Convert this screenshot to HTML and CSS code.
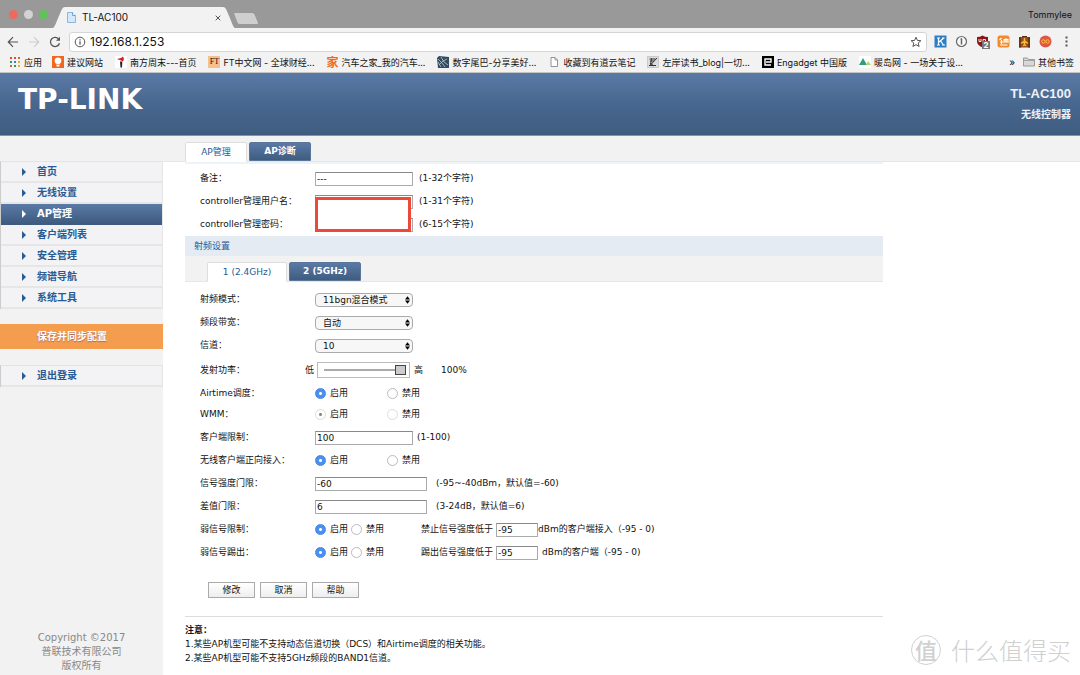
FILE: index.html
```html
<!DOCTYPE html>
<html lang="zh-CN">
<head>
<meta charset="utf-8">
<title>TL-AC100</title>
<link rel="stylesheet" href="styles.css">
</head>
<body>
<header class="browser">
  <div class="tabstrip">
    <div class="lights"><i class="light red"></i><i class="light gray"></i><i class="light green"></i></div>
    <div class="tab">
      <svg class="tab-shape" viewBox="0 0 182 21" preserveAspectRatio="none"><path d="M0 21 C2 20 2 18 9 2 Q10 0 12 0 H170 Q172 0 173 2 C180 18 180 20 182 21Z" fill="#f2f2f2"/></svg>
      <svg class="tab-icon" viewBox="0 0 9 11"><path d="M.5.5h5l3 3v7h-8z" fill="#d5e8fb" stroke="#8db6df"/><path d="M5.500.5v3h3" fill="#fff" stroke="#6f9fd0"/></svg>
      <span class="tab-title">TL-AC100</span>
      <button class="tab-close" aria-label="关闭"><svg viewBox="0 0 6 6"><path d="M.7.7l4.600 4.600M5.300.7L.7 5.300" stroke="#555" fill="none"/></svg></button>
    </div>
    <svg class="newtab" viewBox="0 0 24 11"><path d="M1 0h17q2 0 2.500 1.500L24 10q0 1-1 1H6q-2 0-2.500-1.500L.3 1Q0 0 1 0z" fill="#cfcfcf"/></svg>
    <span class="user">Tommylee</span>
  </div>
  <div class="toolbar">
    <button class="nav-btn" aria-label="后退"><svg viewBox="0 0 12 12"><path d="M11 6H1.500M6 1.200L1.300 6 6 10.800" stroke="#555" stroke-width="1.200" fill="none"/></svg></button>
    <button class="nav-btn" aria-label="前进"><svg viewBox="0 0 12 12"><path d="M1 6h9.500M6 1.200L10.700 6 6 10.800" stroke="#ccc" stroke-width="1.200" fill="none"/></svg></button>
    <button class="nav-btn" aria-label="刷新"><svg viewBox="0 0 12 12"><path d="M10 3.500A4.600 4.600 0 1 0 10.500 7.200" stroke="#555" stroke-width="1.300" fill="none"/><path d="M11 .8v4H7z" fill="#555"/></svg></button>
    <div class="omnibox">
      <svg class="info" viewBox="0 0 12 12"><circle cx="6" cy="6" r="4.800" stroke="#555" fill="none"/><path d="M6 5.200v3.600M6 3.200v1.200" stroke="#555" stroke-width="1.200"/></svg>
      <input class="url" aria-label="地址" value="192.168.1.253">
      <svg class="info" viewBox="0 0 12 12"><path d="M6 1.200l1.400 3.200 3.500.3-2.700 2.300.9 3.500L6 8.700l-3.100 1.800.9-3.500L1.100 4.700l3.500-.3z" stroke="#555" fill="none"/></svg>
    </div>
    <div class="exts">
      <svg class="ext" viewBox="0 0 13 13"><path d="M.5.5h12v12H.5z" fill="#2c7fc4"/><path d="M3 3h3M3 10h3M4.500 3v7M8 3h2.500M9.500 3.200L5 7M6.500 5.800L9.500 10M8 10h3" stroke="#fff" stroke-width="1.200"/></svg>
      <svg class="ext" viewBox="0 0 13 13"><circle cx="6.500" cy="6.500" r="5" stroke="#666" fill="#fafafa" stroke-width="1.200"/><path d="M6.500 3.500v6M5.500 4h1.500" stroke="#666" stroke-width="1.500"/></svg>
      <span class="ublock"><svg class="ext" viewBox="0 0 13 13"><path d="M6.500.5Q9 2 12 2v4.500Q12 10 6.500 12.500 1 10 1 6.500V2Q4 2 6.500.5z" fill="#8c1616"/><path d="M3 4v2.500h2V4M7 8V4.500h2.500v2H7" stroke="#fff" fill="none" stroke-width=".9"/></svg><b class="count">2</b></span>
      <svg class="ext" viewBox="0 0 13 13"><rect x=".5" y=".5" width="12" height="12" rx="2.500" fill="#f08a2c"/><path d="M2.500 5l2-2M3 7h3M4.500 5v4M7 8V4.500h4V8M9 3v5M3 10h7.500M7 6h4" stroke="#fff" fill="none" stroke-width="1.100"/></svg>
      <svg class="ext" viewBox="0 0 13 13"><path d="M4 1h5v2H4z" fill="#5a2d11"/><path d="M1 2h11v10.500H1z" fill="#974d1c"/><path d="M1 2h2v10.500H1zM10 2h2v10.500h-2z" fill="#6d3210"/><path d="M6.500 2.500l.8 1.200v2.100l3 2v1l-3-.8v1.600l1 .9v.7l-1.800-.5-1.800.5v-.7l1-.9V8l-3 .8v-1l3-2V3.700z" fill="#f5bd37"/></svg>
      <svg class="ext" viewBox="0 0 13 13"><circle cx="6.500" cy="6.500" r="6" fill="#e35446"/><circle cx="4.400" cy="6.500" r="1.700" fill="none" stroke="#f8c640"/><circle cx="8.600" cy="6.500" r="1.700" fill="none" stroke="#f8c640"/></svg>
      <svg class="ext" viewBox="0 0 13 13"><path d="M5.500 1.500h2v2h-2zM5.500 5.500h2v2h-2zM5.500 9.500h2v2h-2z" fill="#555"/></svg>
    </div>
  </div>
  <nav class="bookmarks">
    <a class="bm apps" href="#"><svg viewBox="0 0 12 12"><path d="M1 1h2v2H1zM5 1h2v2H5z" fill="#e24a3b"/><path d="M9 1h2v2H9zM1 9h2v2H1z" fill="#d9632f"/><path d="M1 5h2v2H1zM5 9h2v2H5z" fill="#2f9b51"/><path d="M5 5h2v2H5z" fill="#397de0"/><path d="M9 5h2v2H9zM9 9h2v2H9z" fill="#e6b12a"/></svg>应用</a>
    <a class="bm" href="#"><svg viewBox="0 0 12 12"><path d="M0 0h12v12H0z" fill="#f2671f"/><circle cx="6" cy="4.800" r="3.300" fill="#fff"/><path d="M4.500 7h3v3.500h-3z" fill="#fff"/><path d="M4.500 8.500h3" stroke="#f2671f" stroke-width=".6"/></svg>建议网站</a>
    <a class="bm" href="#"><svg viewBox="0 0 12 12"><path d="M0 0h12v12H0z" fill="#fff"/><path d="M2 3l4-1 2-1.500L9 3 8 5.500 6 4.500z" fill="#d91f1f"/><path d="M5 5.500h2.300L7 11.500H5.500z" fill="#222"/></svg>南方周末---首页</a>
    <a class="bm" href="#"><span class="ft">FT</span>FT中文网 - 全球财经...</a>
    <a class="bm" href="#"><span class="jia">家</span>汽车之家_我的汽车...</a>
    <a class="bm" href="#"><svg viewBox="0 0 12 12"><path d="M0 2l2-2 10 1v11H1z" fill="#334b5d"/><path d="M1 3l4 4 3 4M4 1l3 5 4 3M2 9l4-4 4-2M1 6l3 5" stroke="#b9cbd7" stroke-width=".8" fill="none"/></svg>数字尾巴-分享美好...</a>
    <a class="bm" href="#"><svg viewBox="0 0 12 12"><path d="M3 1.500h4L9.500 4v6.500H3z" fill="#fff" stroke="#888" stroke-width=".9"/><path d="M7 1.500V4h2.500" fill="none" stroke="#888" stroke-width=".8"/></svg>收藏到有道云笔记</a>
    <a class="bm" href="#"><svg viewBox="0 0 12 12"><path d="M.5.500h11v11H.5z" fill="#ddd" stroke="#aaa" stroke-width=".5"/><path d="M2.500 3h6M3 5h4M2 9.500h7M10 2L4 8.500M3 7l4 3M4.500 2.500l-1 7" stroke="#333" fill="none"/></svg>左岸读书_blog|一切...</a>
    <a class="bm" href="#"><svg viewBox="0 0 12 12"><path d="M0 0h12v12H0z" fill="#000"/><path d="M9 9H3V3h6v3H4" stroke="#fff" stroke-width="1.400" fill="none"/></svg>Engadget 中国版</a>
    <a class="bm" href="#"><svg viewBox="0 0 12 12"><path d="M0 0h12v12H0z" fill="#fff"/><path d="M0 9l4-7 4 7z" fill="#2f9c7e"/><path d="M7 9l2-4 3 4z" fill="#b5d46e"/></svg>暖岛网 - 一场关于设...</a>
    <button class="more">»</button>
    <a class="bm other" href="#"><svg viewBox="0 0 12 12"><path d="M.5 2h4l1 1.500h6V10H.5z" fill="#d8d8d8" stroke="#888" stroke-width=".8"/><path d="M.5 4.500h11" stroke="#999" stroke-width=".8"/></svg>其他书签</a>
  </nav>
</header>

<section class="banner">
  <div class="logo">TP-LINK</div>
  <div class="model"><strong class="model-name">TL-AC100</strong><span class="model-kind">无线控制器</span></div>
</section>

<div class="page">
  <aside class="side">
    <nav class="menu">
      <a class="item" href="#">首页</a>
      <a class="item" href="#">无线设置</a>
      <a class="item active" href="#">AP管理</a>
      <a class="item" href="#">客户端列表</a>
      <a class="item" href="#">安全管理</a>
      <a class="item" href="#">频谱导航</a>
      <a class="item" href="#">系统工具</a>
    </nav>
    <button class="save">保存并同步配置</button>
    <nav class="menu"><a class="item" href="#">退出登录</a></nav>
    <footer class="copy">Copyright ©2017<br>普联技术有限公司<br>版权所有</footer>
  </aside>
  <main class="main">
    <div class="strip top"><button class="ptab on">AP管理</button><button class="ptab">AP诊断</button></div>
    <form class="form">
      <div class="rows first">
        <div class="row"><label class="label" for="note">备注：</label><input class="text" id="note" value="---"><span class="hint">(1-32个字符)</span></div>
        <div class="row"><label class="label" for="usr">controller管理用户名：</label><input class="text" id="usr"><span class="hint">(1-31个字符)</span></div>
        <div class="row"><label class="label" for="pwd">controller管理密码：</label><input class="text" id="pwd" type="password"><span class="hint">(6-15个字符)</span></div>
        <div class="mask"></div>
      </div>
      <h2 class="section">射频设置</h2>
      <div class="strip sub"><button type="button" class="ptab on">1 (2.4GHz)</button><button type="button" class="ptab">2 (5GHz)</button></div>
      <div class="rows radio-rows">
        <div class="row"><label class="label" for="mode">射频模式：</label><span class="pick"><select id="mode"><option>11bgn混合模式</option></select><svg viewBox="0 0 6 9"><path d="M3 0l3 4H0zM3 9L0 5h6z"/></svg></span></div>
        <div class="row"><label class="label" for="bw">频段带宽：</label><span class="pick"><select id="bw"><option>自动</option></select><svg viewBox="0 0 6 9"><path d="M3 0l3 4H0zM3 9L0 5h6z"/></svg></span></div>
        <div class="row"><label class="label" for="ch">信道：</label><span class="pick"><select id="ch"><option>10</option></select><svg viewBox="0 0 6 9"><path d="M3 0l3 4H0zM3 9L0 5h6z"/></svg></span></div>
        <div class="row power"><label class="label" for="pw">发射功率：</label><span>低</span><input class="slider" id="pw" type="range" value="100"><span>高</span><span class="percent">100%</span></div>
        <div class="row short"><span class="label">Airtime调度：</span><label class="opt"><input type="radio" name="air" checked>启用</label><label class="opt"><input type="radio" name="air">禁用</label></div>
        <div class="row"><span class="label">WMM：</span><label class="opt"><input type="radio" name="wmm" checked disabled>启用</label><label class="opt"><input type="radio" name="wmm" disabled>禁用</label></div>
        <div class="row"><label class="label" for="lim">客户端限制：</label><input class="text" id="lim" value="100"><span class="hint near">(1-100)</span></div>
        <div class="row"><span class="label">无线客户端正向接入：</span><label class="opt"><input type="radio" name="fwd" checked>启用</label><label class="opt"><input type="radio" name="fwd">禁用</label></div>
        <div class="row"><label class="label" for="sig">信号强度门限：</label><input class="text wide" id="sig" value="-60"><span class="hint">(-95~-40dBm，默认值=-60)</span></div>
        <div class="row"><label class="label" for="dif">差值门限：</label><input class="text wide" id="dif" value="6"><span class="hint">(3-24dB，默认值=6)</span></div>
        <div class="row"><span class="label">弱信号限制：</span><label class="opt tight"><input type="radio" name="wl" checked>启用</label><label class="opt last"><input type="radio" name="wl">禁用</label><label for="wlv">禁止信号强度低于</label><input class="text small" id="wlv" value="-95"><span>dBm的客户端接入（-95 - 0)</span></div>
        <div class="row"><span class="label">弱信号踢出：</span><label class="opt tight"><input type="radio" name="wk" checked>启用</label><label class="opt last"><input type="radio" name="wk">禁用</label><label for="wkv">踢出信号强度低于</label><input class="text small" id="wkv" value="-95"><span class="after">dBm的客户端（-95 - 0)</span></div>
      </div>
      <div class="actions"><button type="button" class="btn">修改</button><button type="button" class="btn">取消</button><button type="button" class="btn">帮助</button></div>
    </form>
    <div class="notes"><strong>注意：</strong><p>1.某些AP机型可能不支持动态信道切换（DCS）和Airtime调度的相关功能。</p><p>2.某些AP机型可能不支持5GHz频段的BAND1信道。</p></div>
  </main>
</div>
<div class="watermark"><span class="seal">值</span><span>什么值得买</span></div>
</body>
</html>
```
FILE: styles.css
```css
* { box-sizing: border-box; }
body {
  margin: 0;
  min-height: 100vh;
  display: flex;
  flex-direction: column;
  position: relative;
  background: #fff;
  color: #111;
  font: 9px/13px "DejaVu Sans", "Noto Sans CJK SC", sans-serif;
}
button, input, select { font: inherit; color: inherit; margin: 0; }
button { border: 0; padding: 0; background: none; }
a { color: inherit; text-decoration: none; }

/* Browser chrome */
.browser { font-family: Inter, "Noto Sans CJK SC", sans-serif; background: #f2f2f2; border-bottom: 1px solid #c4c4c4; }
.tabstrip { display: flex; height: 28px; background: #999; }
.lights { display: flex; gap: 6px; padding: 10px 5px 0 9px; }
.light { width: 9px; height: 9px; border-radius: 50%; }
.red { background: #ee6a5f; }
.gray { background: #d3d3d3; }
.green { background: #60c454; }
.tab { position: relative; display: flex; align-items: center; width: 182px; height: 21px; margin-top: 7px; padding: 0 14px; font-size: 10px; }
.tab-shape { position: absolute; inset: 0; width: 100%; height: 100%; }
.tab-icon { position: relative; width: 9px; height: 11px; }
.tab-title { position: relative; margin-left: 6px; }
.tab-close { position: relative; display: flex; width: 6px; margin-left: auto; }
.newtab { width: 24px; height: 11px; margin: 13px 0 0 -1px; }
.user { margin: 8px 8px 0 auto; }
.toolbar { display: flex; align-items: center; height: 27px; padding: 0 7px; }
.nav-btn { display: flex; width: 12px; height: 12px; margin-right: 9px; }
.nav-btn:nth-child(3) { margin-right: 8px; }
.nav-btn svg { width: 12px; }
.omnibox { flex: 1; display: flex; align-items: center; height: 20px; padding: 0 4px; background: #fff; border: 1px solid #d5d5d5; border-radius: 3px; }
.info { width: 12px; height: 12px; }
.url { flex: 1; border: 0; padding: 0 4px; outline: 0; font-size: 12px; background: none; }
.exts { display: flex; gap: 8px; margin-left: 7px; }
.ext { display: block; width: 13px; height: 13px; }
.ublock { position: relative; }
.count { position: absolute; left: 6px; top: 6px; width: 8px; height: 8px; background: #777; color: #fff; font-size: 8px; line-height: 8px; text-align: center; }
.bookmarks { display: flex; align-items: center; height: 17px; padding: 0 6px 3px 9px; white-space: nowrap; }
.bm { display: flex; align-items: center; gap: 3px; margin-right: 12px; }
.bm.apps { margin-right: 10px; }
.bm svg { width: 12px; height: 12px; }
.ft { width: 12px; height: 12px; background: #f5c08c; font: 8px/11px "Liberation Serif", serif; text-align: center; }
.jia { font-size: 12px; font-weight: 700; color: #f06b18; }
.more { margin: 0 8px 0 auto; font-size: 10px; }
.bm.other { margin-right: 0; }

/* Device banner */
.banner { display: flex; justify-content: space-between; height: 63px; padding: 13px 9px 0 18px; background: linear-gradient(#5a7aa6, #48678f 50%, #3f5c80); border-bottom: 1px solid #8294ab; color: #fff; }
.logo { font-size: 28px; line-height: 27px; font-weight: 700; }
.model { display: flex; flex-direction: column; align-items: flex-end; gap: 6px; color: #eef2f8; }
.model-name { font: 700 13px/16px "Liberation Sans", sans-serif; }
.model-kind { font-size: 10px; line-height: 14px; font-weight: 700; }

/* Page frame */
.page { flex: 1; display: flex; }
.side { width: 163px; display: flex; flex-direction: column; background: #f2f2f2; padding-top: 25px; }
.menu { border-top: 1px solid #e3e3e3; border-left: 1px solid #ccc; border-right: 1px solid #e6e6e6; }
.item { position: relative; display: block; height: 21px; padding-left: 36px; border-bottom: 2px solid #e6e6e6; background: #f3f3f5; color: #285a94; font-size: 10px; line-height: 20px; font-weight: 700; }
.item::before { content: ""; position: absolute; left: 21px; top: 6px; border: 4px solid transparent; border-left-color: #285a94; border-right: 0; }
.item.active { background: linear-gradient(#5a7aa6, #3f5c80); border-color: #3f5c80; color: #fff; }
.item.active::before { border-left-color: #fff; }
.save { height: 25px; margin: 15px 0 16px; padding-left: 37px; background: #f49d4e; color: #fff; font-size: 10px; font-weight: 700; text-align: left; text-shadow: 0 1px 1px #a66; }
.copy { margin-top: auto; padding-bottom: 2px; color: #888; font-size: 10px; line-height: 14px; text-align: center; }
.main { flex: 1; min-width: 0; }

.strip { display: flex; align-items: flex-end; gap: 2px; background: #f2f2f2; border-bottom: 1px solid #e6e6e6; }
.strip.top { height: 26px; padding-left: 22px; }
.strip.sub { height: 26px; padding-left: 22px; }
.ptab { min-width: 62px; height: 19px; padding: 0 13px; background: linear-gradient(#5a7aa6, #3f5c80); border: 1px solid #5a7699; border-radius: 2px 2px 0 0; color: #fff; font-size: 9px; font-weight: 700; }
.ptab.on { background: #fff; border-color: #ddd #ddd #fff; color: #285a94; font-weight: 400; height: 20px; margin-bottom: -1px; }
.sub .ptab { min-width: 70px; }
.sub .ptab.on { min-width: 80px; }

.form, .notes { max-width: 698px; margin-left: 22px; }
.form { border-top: 2px solid #edf3f7; }
.rows { position: relative; padding-left: 15px; }
.rows.first { padding-top: 3px; }
.radio-rows { padding-top: 6px; }
.section { height: 20px; margin: 0; padding-left: 9px; background: #e4ebf2; color: #285a94; font-size: 9px; line-height: 20px; font-weight: 400; }
.row { display: flex; align-items: center; height: 23px; white-space: nowrap; }
.label { width: 115px; }
.text { width: 98px; height: 14px; padding: 1px 1px 0; border: 1px solid #aaa; border-top-color: #888; background: #fff; border-radius: 0; }
.text.wide { width: 112px; }
.text.small { width: 42px; margin-left: 3px; }
.hint { margin-left: 6px; }
.near { margin-left: 4px; }
.wide + .hint { margin-left: 9px; }
.after { margin-left: 4px; }
.mask { position: absolute; left: 130px; top: 33px; width: 96px; height: 35px; border: 3px solid #ee4838; background: #fff; }
.pick { position: relative; display: flex; }
.pick select { appearance: none; width: 98px; height: 14px; padding: 1px 7px 0; border: 1px solid #aaa; border-radius: 4px; background: #f7f7f7; line-height: 11px; }
.pick svg { position: absolute; right: 3px; top: 3px; width: 5px; height: 8px; pointer-events: none; }
.power { height: 26px; }
.short { height: 20px; }
.power .label { width: 105px; }
.slider { appearance: none; width: 93px; height: 16px; margin: 0 4px 0 3px; padding: 0 3px; border: 1px solid #bbb; background: #fff; }
.slider::-webkit-slider-runnable-track { height: 10px; background: linear-gradient(#aaa, #aaa) 3px 4px / 100% 2px no-repeat; }
.slider::-webkit-slider-thumb { appearance: none; width: 11px; height: 10px; border: 1px solid #444; background: #ccc; }
.percent { margin-left: 18px; }
.opt { display: flex; align-items: center; width: 72px; }
.opt.tight { width: 36px; }
.opt.last { width: 70px; }
.opt input { appearance: none; flex: none; width: 11px; height: 11px; margin-right: 4px; border: 1px solid #bbb; border-radius: 50%; background: #fff; }
.opt input:checked { border-color: #3f86e8; background: radial-gradient(circle, #fff 1px, #4a90f2 2px); }
.opt input:disabled { border-color: #ddd; }
.opt input:disabled:checked { background: radial-gradient(circle, #888 1px, #fff 2px); }
.actions { display: flex; gap: 5px; padding: 18px 0 18px 23px; }
.btn { width: 47px; height: 16px; border: 1px solid #aaa; background: linear-gradient(#fff, #eee); }
.notes { border-top: 1px solid #ddd; padding-top: 6px; line-height: 14px; }
.notes strong { display: block; }
.notes p { margin: 0; }

.watermark { position: absolute; right: 9px; bottom: 8px; display: flex; align-items: center; gap: 10px; color: #d0d0d0; font: 300 24px/34px "Noto Sans CJK SC", sans-serif; }
.seal { width: 30px; height: 30px; border: 1px solid #d0d0d0; border-radius: 50%; font-size: 22px; line-height: 27px; font-weight: 500; text-align: center; }
```
